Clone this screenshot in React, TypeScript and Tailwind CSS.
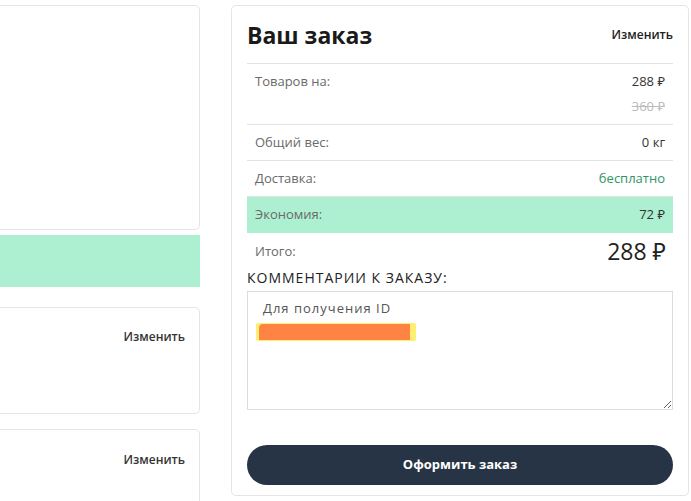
import React from "react";

const font = { fontFamily: "'Open Sans', 'Noto Sans', sans-serif" };

function Row({ label, children, green }: { label: string; children: React.ReactNode; green?: boolean }) {
  return (
    <div
      className={
        "flex justify-between items-start px-2 py-2 h-[36px] " +
        (green ? "bg-[#adf0d1]" : "border-b border-[#e2e2e2]")
      }
    >
      <span className="text-[13px] leading-[19px] text-[#6a6a6a]">{label}</span>
      <span className="text-[13px] leading-[19px] text-right">{children}</span>
    </div>
  );
}

export default function App() {
  return (
    <div className="w-[691px] h-[501px] overflow-hidden bg-white flex items-start gap-[31px] pt-[5px]" style={font}>
      {/* left column, cut off by the viewport */}
      <div className="flex flex-col w-[210px] -ml-[10px] shrink-0">
        <div className="shrink-0 h-[225px] rounded-[5px] border border-[#e5e5e5]" />
        <div className="shrink-0 h-[52px] mt-[5px] bg-[#adf0d1]" />
        <div className="shrink-0 h-[107px] mt-[20px] rounded-[5px] border border-[#e5e5e5] flex justify-end pt-[20px] pr-[14px]">
          <span className="text-[12px] font-semibold text-[#333] leading-[18px]">Изменить</span>
        </div>
        <div className="shrink-0 h-[100px] mt-[15px] rounded-[5px] border border-[#e5e5e5] flex justify-end pt-[21px] pr-[14px]">
          <span className="text-[12px] font-semibold text-[#333] leading-[18px]">Изменить</span>
        </div>
      </div>

      {/* order summary */}
      <div className="w-[458px] h-[491px] shrink-0 rounded-[5px] border border-[#e5e5e5] px-[15px] flex flex-col">
        <div className="flex items-center justify-between h-[58px] pt-[1px] border-b border-[#e2e2e2]">
          <h2 className="text-[23px] font-bold text-[#1a1a1a] leading-none">Ваш заказ</h2>
          <span className="text-[12px] font-semibold text-[#222]">Изменить</span>
        </div>

        <div className="flex justify-between px-2 pt-[8px] pb-[8px] border-b border-[#e2e2e2] h-[61px]">
          <span className="text-[13px] leading-[19px] text-[#6a6a6a]">Товаров на:</span>
          <div className="flex flex-col items-end gap-[6px]">
            <span className="text-[13px] leading-[19px] text-[#333]">288 ₽</span>
            <span className="text-[13px] leading-[19px] text-[#bbb] line-through">360 ₽</span>
          </div>
        </div>

        <Row label="Общий вес:">
          <span className="text-[#333]">0 кг</span>
        </Row>
        <Row label="Доставка:">
          <span className="text-[#2f9466]">бесплатно</span>
        </Row>
        <Row label="Экономия:" green>
          <span className="text-[#333]">72 ₽</span>
        </Row>

        <div className="flex justify-between items-center px-2 h-[36px]">
          <span className="text-[13px] leading-[19px] text-[#6a6a6a]">Итого:</span>
          <span className="text-[23px] leading-none text-[#222] -mr-[1px]">288 ₽</span>
        </div>

        <div className="text-[14px] tracking-[1px] text-[#222] leading-[18px]">КОММЕНТАРИИ К ЗАКАЗУ:</div>

        <div className="relative mt-[4px]">
          <textarea
            className="block w-full h-[119px] border border-[#dcdcdc] px-[15px] py-[6px] text-[13px] tracking-[1px] leading-[20px] text-[#555] outline-none resize-y"
            style={font}
            defaultValue={"Для получения ID"}
          />
          <div className="absolute left-[9px] top-[32px] w-[160px] h-[18px] bg-[#ffef70] rounded-[2px]">
            <div className="ml-[3px] mt-[1px] w-[151px] h-[16px] bg-[#ff8343] rounded-tl-[4px]" />
          </div>
        </div>

        <button className="mt-[35px] h-[40px] w-full rounded-full bg-[#263445] text-white text-[13px] font-bold" style={font}>
          Оформить заказ
        </button>
      </div>
    </div>
  );
}
